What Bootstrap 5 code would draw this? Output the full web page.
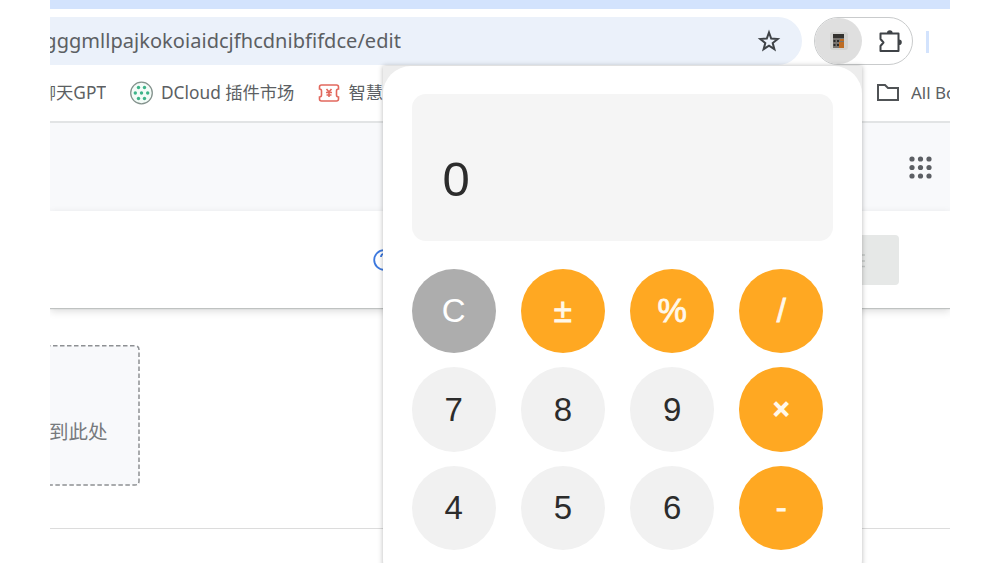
<!DOCTYPE html>
<html lang="zh-CN">
<head>
    <meta charset="UTF-8">
    <meta name="viewport" content="width=device-width, initial-scale=1.0">
    <title>Calculator</title>
    <link href="https://cdn.jsdelivr.net/npm/bootstrap@5.3.0/dist/css/bootstrap.min.css" rel="stylesheet">
    <style>
        body {
            background: #fff;
            font-family: "Noto Sans", "Noto Sans CJK SC", sans-serif;
            color: #5c5f63;
            overflow: hidden;
        }
        svg { display: block; flex-shrink: 0; }
        .browser { width: 900px; height: 563px; }
        .tab-strip { height: 9px; background: #d3e3fd; }
        .toolbar { height: 56px; padding-top: 8px; }
        .address {
            width: 752px;
            height: 48px;
            background: #ebf1fa;
            border-radius: 0 24px 24px 0;
            padding-right: 21px;
        }
        .url { width: 351px; font-size: 20px; letter-spacing: .04px; white-space: nowrap; }
        .ext-pill {
            width: 99px;
            height: 48px;
            margin-left: 12px;
            border: 1px solid #c9cbcc;
            border-radius: 24px;
            padding-right: 9px;
        }
        .ext-active { width: 47px; height: 46px; background: #dfdfdf; border-radius: 23px; }
        .toolbar-sep { width: 3px; height: 22px; margin: 1px 0 0 13px; background: #d3e3fd; }
        .bookmarks {
            height: 58px;
            border-bottom: 2px solid #e2e4e5;
            font-size: 17.3px;
            white-space: nowrap;
        }
        .bm-gpt { width: 56px; }
        .bm-dcloud { margin-left: 7px; }
        .bm-all { width: 39px; margin-left: 11px; font-size: 17px; }
        .app-header { height: 88px; background: #f8f9fb; padding-right: 18px; }
        .action-bar { height: 97px; box-shadow: 0 1px 1px #bfc2c1, 0 3px 8px rgba(0, 0, 0, .15); padding-right: 51px; }
        .help-icon { margin-left: 323px; }
        .gray-btn { width: 90px; height: 50px; background: #e6e8e7; border-radius: 4px; }
        .content { height: 221px; padding-top: 37px; border-bottom: 1px solid #dcdcdc; }
        .drop-box { width: 90px; height: 141px; font-size: 19.5px; }
        .popup { left: 333px; top: 66px; width: 479px; height: 520px; background: #ededed; box-shadow: 0 0 5px rgba(0, 0, 0, .28); z-index: 5; }
        .calc { height: 100%; background: #fff; border-radius: 28px; padding: 28px 29px 0 28.5px; }
        .calc, .calc .btn { font-family: "Liberation Sans", Arial, sans-serif; }
        .display { height: 147px; background: #f5f5f5; border-radius: 14px; padding: 49px 0 0 31px; font-size: 49px; color: #2c2c2c; }
        .keys {
            display: grid;
            grid-template-columns: repeat(4, 84.5px);
            grid-auto-rows: 84.5px;
            justify-content: space-between;
            row-gap: 14px;
            padding: 27.5px 9.500px 0 0;
        }
        .keys .btn { border: 0; padding: 0; border-radius: 50%; font-size: 33px; line-height: 83px; background: #f1f1f1; color: #2c2c2c; }
        .keys .key-op { background: #ffa822; color: #fff8ea; -webkit-text-stroke: .8px #fff8ea; }
        .keys .key-times { font-size: 29px; -webkit-text-stroke-width: 1.8px; }
        .keys .key-clear { background: #adadad; color: #fff; }
    </style>
</head>
<body>
    <div class="browser position-relative mx-auto overflow-hidden">
        <div class="tab-strip"></div>

        <div class="toolbar d-flex align-items-center">
            <div class="address d-flex align-items-center justify-content-between">
                <div class="url d-flex justify-content-end overflow-hidden"><span>ggggmllpajkokoiaidcjfhcdnibfifdce/edit</span></div>
                <svg width="24" height="24" viewBox="0 0 24 24" fill="none" stroke="#3f4347" stroke-width="2">
                    <path d="M12 3.500l2.200 6 6.500.5-5 4 1.700 6.200-5.400-3.500-5.400 3.500L8.300 14l-5-4 6.500-.5z"/>
                </svg>
            </div>
            <div class="ext-pill d-flex align-items-center justify-content-between">
                <div class="ext-active d-flex align-items-center justify-content-center">
                    <svg width="20" height="20" viewBox="0 0 20 20">
                        <rect x="1" y="1" width="18" height="18" rx="3" fill="#d2d2d0"/>
                        <rect x="4" y="3" width="11" height="14" fill="#77736e"/>
                        <rect x="4" y="3" width="11" height="4" fill="#34322f"/>
                        <path d="M4.500 9h2v2h-2zM8 9h2v2H8zM4.500 13h2v2h-2zM8 13h2v2H8z" fill="#292929"/>
                        <path d="M11 8h4v2h-4zM10 11h5v6h-5z" fill="#bd6c24"/>
                    </svg>
                </div>
                <svg width="25" height="25" viewBox="0 0 25 25">
                    <path d="M2.500 4.500H20.500V22H2.500v-5l3-3.500-3-3.500z" fill="none" stroke="#3f4347" stroke-width="2" stroke-linejoin="round"/>
                    <path d="M9 4a2.800 2.800 0 0 1 5.600 0zM21 10.500a2.800 2.800 0 0 1 0 5.600z" fill="#3f4347"/>
                </svg>
            </div>
            <div class="toolbar-sep"></div>
        </div>

        <div class="bookmarks d-flex align-items-center">
            <div class="bm-gpt d-flex justify-content-end overflow-hidden"><span>聊天GPT</span></div>
            <svg class="ms-4" width="24" height="24" viewBox="0 0 24 24">
                <circle cx="11.500" cy="12" r="10.800" fill="#f3fbf7" stroke="#84928d" stroke-width="1.300"/>
                <g fill="#3db489">
                    <circle cx="8.500" cy="6.500" r="1.700"/><circle cx="14.500" cy="6.500" r="1.700"/>
                    <circle cx="5.300" cy="12" r="1.700"/><circle cx="11.500" cy="12" r="1.700"/><circle cx="17.700" cy="12" r="1.700"/>
                    <circle cx="8.500" cy="17.500" r="1.700"/><circle cx="14.500" cy="17.500" r="1.700"/>
                </g>
            </svg>
            <span class="bm-dcloud">DCloud 插件市场</span>
            <svg class="ms-4" width="22" height="18" viewBox="0 0 22 18" fill="none" stroke="#e2685d" stroke-width="1.600">
                <path d="M1.500 5V3q0-2 2-2h15q2 0 2 2v2q-2 0-2 2v4q0 2 2 2v2q0 2-2 2h-15q-2 0-2-2v-2q2 0 2-2V7q0-2-2-2z"/>
                <path d="M8.500 5l2.500 3 2.500-3M11 8v5M8 8.500h6M8.500 11h5"/>
            </svg>
            <span class="bm-zh ms-2">智慧</span>
            <svg class="ms-auto" width="24" height="20" viewBox="0 0 24 20" fill="none" stroke="#505356" stroke-width="2">
                <path d="M2 2h7l3 3h10v12H2z"/>
            </svg>
            <div class="bm-all overflow-hidden">All Bookmarks</div>
        </div>

        <div class="app-header d-flex align-items-center justify-content-end">
            <svg width="23" height="23" viewBox="0 0 23 23" fill="#5c5f64">
                <circle cx="3" cy="3" r="2.600"/><circle cx="11.500" cy="3" r="2.600"/><circle cx="20" cy="3" r="2.600"/>
                <circle cx="3" cy="11.500" r="2.600"/><circle cx="11.500" cy="11.500" r="2.600"/><circle cx="20" cy="11.500" r="2.600"/>
                <circle cx="3" cy="20" r="2.600"/><circle cx="11.500" cy="20" r="2.600"/><circle cx="20" cy="20" r="2.600"/>
            </svg>
        </div>

        <div class="action-bar d-flex align-items-center justify-content-between">
            <svg class="help-icon" width="22" height="22" viewBox="0 0 22 22" fill="none" stroke="#3c78de" stroke-width="1.800">
                <circle cx="11" cy="11" r="9.800"/>
                <path d="M8 8a3 3 0 1 1 4.500 2.500q-1.500 1-1.500 2.500M11 15v2"/>
            </svg>
            <div class="gray-btn d-flex align-items-center">
                <svg class="ms-5" width="8" height="16" viewBox="0 0 8 16" stroke="#c4c7c6" stroke-width="1.500">
                    <path d="M0 3h8M0 9h8M0 14.500h8"/>
                </svg>
            </div>
        </div>

        <div class="content">
            <div class="drop-box">
                <svg width="90" height="141" viewBox="0 0 90 141">
                    <path d="M-4 .8H85q4 0 4 4V136q0 4-4 4H-4z" fill="#f8f9fb" stroke="#8d9093" stroke-width="1.500" stroke-dasharray="4.500 2.500"/>
                    <text x="-1" y="93.500" fill="#777a7d">到此处</text>
                </svg>
            </div>
        </div>

        <div class="popup position-absolute">
            <div class="calc">
                <div class="display">0</div>
                <div class="keys">
                    <button class="btn key-clear">C</button>
                    <button class="btn key-op">±</button>
                    <button class="btn key-op">%</button>
                    <button class="btn key-op">/</button>
                    <button class="btn">7</button>
                    <button class="btn">8</button>
                    <button class="btn">9</button>
                    <button class="btn key-op key-times">×</button>
                    <button class="btn">4</button>
                    <button class="btn">5</button>
                    <button class="btn">6</button>
                    <button class="btn key-op">-</button>
                </div>
            </div>
        </div>
    </div>
    <script src="https://cdn.jsdelivr.net/npm/bootstrap@5.3.0/dist/js/bootstrap.bundle.min.js"></script>
</body>
</html>
